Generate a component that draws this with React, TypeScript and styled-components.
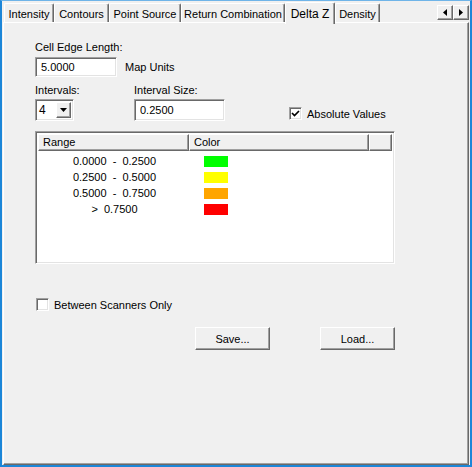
import React from 'react'
import styled, { createGlobalStyle } from 'styled-components'

const GlobalStyle = createGlobalStyle`
  html, body {
    margin: 0;
    padding: 0;
    background: #f0f0f0;
  }
  * {
    box-sizing: border-box;
  }
`

interface TabItem {
  label: string;
  width: number;
}

const tabs: TabItem[] = [
  { label: 'Intensity', width: 50 },
  { label: 'Contours', width: 55 },
  { label: 'Point Source', width: 72 },
  { label: 'Return Combination', width: 104 },
  { label: 'Delta Z', width: 50 },
  { label: 'Density', width: 45 },
]

const ranges = [
  { text: '0.0000  -  0.2500', color: '#00ff00' },
  { text: '0.2500  -  0.5000', color: '#ffff00' },
  { text: '0.5000  -  0.7500', color: '#ffa500' },
  { text: '>  0.7500', color: '#ff0000' },
]

const App = () => {
  return (
    <>
      <GlobalStyle />
      <Window>
        <TabStrip>
          {tabs.map((t) => (
            <Tab key={t.label} width={t.width} active={t.label === 'Delta Z'}>
              {t.label}
            </Tab>
          ))}
          <Scroller>
            <ScrollButton>
              <svg width="4" height="7" viewBox="0 0 4 7"><path d="M4 0 L0 3.5 L4 7 Z" fill="#000" /></svg>
            </ScrollButton>
            <ScrollButton>
              <svg width="4" height="7" viewBox="0 0 4 7"><path d="M0 0 L4 3.5 L0 7 Z" fill="#000" /></svg>
            </ScrollButton>
          </Scroller>
        </TabStrip>
        <Panel>
          <Label>Cell Edge Length:</Label>
          <FieldRow>
            <TextInput width={82} height={20} defaultValue="5.0000" />
            <Units>Map Units</Units>
          </FieldRow>

          <IntervalGrid>
            <Column>
              <Label>Intervals:</Label>
              <Combo>
                <ComboValue>4</ComboValue>
                <ComboButton>
                  <svg width="7" height="4" viewBox="0 0 7 4"><path d="M0 0 L7 0 L3.5 4 Z" fill="#000" /></svg>
                </ComboButton>
              </Combo>
            </Column>
            <Column>
              <Label>Interval Size:</Label>
              <TextInput width={91} height={22} defaultValue="0.2500" />
            </Column>
            <CheckRow>
              <CheckBox>
                <svg width="9" height="9" viewBox="0 0 9 9">
                  <path d="M1 4 L3.5 6.5 L8 2" stroke="#000" strokeWidth="1.7" fill="none" />
                </svg>
              </CheckBox>
              <span>Absolute Values</span>
            </CheckRow>
          </IntervalGrid>

          <ListView>
            <Header>
              <HeaderCell width={151}>Range</HeaderCell>
              <HeaderCell width={180}>Color</HeaderCell>
              <HeaderCell width={27} />
            </Header>
            <Rows>
              {ranges.map((r) => (
                <Row key={r.text}>
                  <RangeCell>{r.text}</RangeCell>
                  <ColorCell>
                    <Swatch color={r.color} />
                  </ColorCell>
                </Row>
              ))}
            </Rows>
          </ListView>

          <ScannerRow>
            <CheckBox />
            <span>Between Scanners Only</span>
          </ScannerRow>

          <Buttons>
            <Button>Save...</Button>
            <Button>Load...</Button>
          </Buttons>
        </Panel>
      </Window>
    </>
  )
}

const Window = styled.div`
  width: 472px;
  height: 467px;
  display: flex;
  flex-direction: column;
  background: #f0f0f0;
  border-left: 2px solid #1c86d8;
  border-right: 2px solid #1c86d8;
  border-bottom: 2px solid #1c86d8;
  border-top: 1px solid #6fb4e8;
  padding: 1px 1px 0 1px;
  font-family: "Liberation Sans", Arial, sans-serif;
  font-size: 11px;
  color: #000;
`

const TabStrip = styled.div`
  display: flex;
  align-items: flex-end;
  height: 21px;
  padding-left: 1px;
  position: relative;
  z-index: 1;
  margin-bottom: -1px;
`

const Tab = styled.div<{ width: number; active?: boolean }>`
  width: ${({ width }) => width}px;
  height: ${({ active }) => (active ? 22 : 19)}px;
  margin-bottom: ${({ active }) => (active ? -1 : 1)}px;
  display: flex;
  align-items: center;
  justify-content: center;
  padding-top: ${({ active }) => (active ? 0 : 1)}px;
  background: #f0f0f0;
  border-top: 1px solid #fff;
  border-left: 1px solid #fff;
  border-right: 1px solid #696969;
  box-shadow: inset -1px 0 #a0a0a0;
  border-radius: 2px 2px 0 0;
  white-space: nowrap;
  font-size: ${({ active }) => (active ? 12 : 11)}px;
`

const Scroller = styled.div`
  display: flex;
  margin-left: auto;
  align-self: flex-start;
  margin-top: 3px;
`

const ScrollButton = styled.div`
  width: 16px;
  height: 15px;
  display: flex;
  align-items: center;
  justify-content: center;
  background: #f0f0f0;
  border-top: 1px solid #fff;
  border-left: 1px solid #fff;
  border-right: 1px solid #696969;
  border-bottom: 1px solid #696969;
  box-shadow: inset -1px -1px #a0a0a0;
`

const Panel = styled.div`
  flex: 1;
  display: flex;
  flex-direction: column;
  border-top: 1px solid #fff;
  border-left: 1px solid #fff;
  border-right: 1px solid #696969;
  border-bottom: 1px solid #696969;
  box-shadow: inset -1px -1px #a0a0a0;
  padding: 18px 0 0 31px;
`

const Label = styled.div`
  line-height: 13px;
  height: 13px;
  white-space: nowrap;
`

const FieldRow = styled.div`
  display: flex;
  align-items: center;
  margin-top: 3px;
`

const TextInput = styled.input<{ width: number; height: number }>`
  width: ${({ width }) => width}px;
  height: ${({ height }) => height}px;
  font-family: inherit;
  font-size: 11px;
  padding: 0 0 0 5px;
  margin: 0;
  outline: none;
  background: #fff;
  border: 1px solid;
  border-color: #a0a0a0 #fff #fff #a0a0a0;
  box-shadow: inset 1px 1px #696969, inset -1px -1px #e3e3e3;
`

const Units = styled.span`
  margin-left: 8px;
`

const IntervalGrid = styled.div`
  display: grid;
  grid-template-columns: 99px 155px auto;
  margin-top: 7px;
`

const Column = styled.div`
  display: flex;
  flex-direction: column;
  gap: 2px;
`

const Combo = styled.div`
  width: 39px;
  height: 22px;
  display: flex;
  align-items: center;
  background: #fff;
  border: 1px solid;
  border-color: #a0a0a0 #fff #fff #a0a0a0;
  box-shadow: inset 1px 1px #696969, inset -1px -1px #e3e3e3;
  padding: 2px 2px 2px 3px;
`

const ComboValue = styled.span`
  flex: 1;
  font-size: 12px;
`

const ComboButton = styled.div`
  width: 15px;
  height: 16px;
  display: flex;
  align-items: center;
  justify-content: center;
  background: #f0f0f0;
  border-top: 1px solid #fff;
  border-left: 1px solid #fff;
  border-right: 1px solid #696969;
  border-bottom: 1px solid #696969;
  box-shadow: inset -1px -1px #a0a0a0;
`

const CheckRow = styled.div`
  display: flex;
  align-items: center;
  gap: 5px;
  align-self: start;
  margin-top: 23px;
`

const CheckBox = styled.div`
  width: 13px;
  height: 13px;
  display: flex;
  align-items: center;
  justify-content: center;
  background: #fff;
  border: 1px solid;
  border-color: #a0a0a0 #fff #fff #a0a0a0;
  box-shadow: inset 1px 1px #696969, inset -1px -1px #e3e3e3;
`

const ListView = styled.div`
  width: 360px;
  height: 133px;
  margin-top: 10px;
  background: #fff;
  border: 1px solid;
  border-color: #a0a0a0 #fff #fff #a0a0a0;
  box-shadow: inset 1px 1px #696969, inset -1px -1px #e3e3e3;
  padding: 2px;
  display: flex;
  flex-direction: column;
`

const Header = styled.div`
  display: flex;
  height: 17px;
  flex-shrink: 0;
`

const HeaderCell = styled.div<{ width: number }>`
  width: ${({ width }) => width}px;
  height: 17px;
  line-height: 15px;
  padding-left: 4px;
  background: #f0f0f0;
  border-top: 1px solid #fff;
  border-left: 1px solid #fff;
  border-right: 1px solid #696969;
  border-bottom: 1px solid #696969;
  box-shadow: inset -1px -1px #a0a0a0;
  flex-shrink: 0;
  &:last-child {
    flex: 1;
  }
`

const Rows = styled.div`
  padding-top: 2px;
`

const Row = styled.div`
  display: flex;
  height: 16px;
  align-items: center;
`

const RangeCell = styled.div`
  width: 151px;
  text-align: center;
  white-space: pre;
  padding-left: 2px;
`

const ColorCell = styled.div`
  padding-left: 15px;
  display: flex;
  align-items: center;
`

const Swatch = styled.div<{ color: string }>`
  width: 24px;
  height: 11px;
  background: ${({ color }) => color};
`

const ScannerRow = styled.div`
  display: flex;
  align-items: center;
  gap: 5px;
  margin-top: 34px;
  margin-left: 1px;
`

const Buttons = styled.div`
  display: flex;
  justify-content: flex-end;
  gap: 50px;
  width: 360px;
  margin-top: 16px;
`

const Button = styled.div`
  width: 75px;
  height: 23px;
  display: flex;
  align-items: center;
  justify-content: center;
  background: #f0f0f0;
  border-top: 1px solid #fff;
  border-left: 1px solid #fff;
  border-right: 1px solid #696969;
  border-bottom: 1px solid #696969;
  box-shadow: inset -1px -1px #a0a0a0;
`

export default App
